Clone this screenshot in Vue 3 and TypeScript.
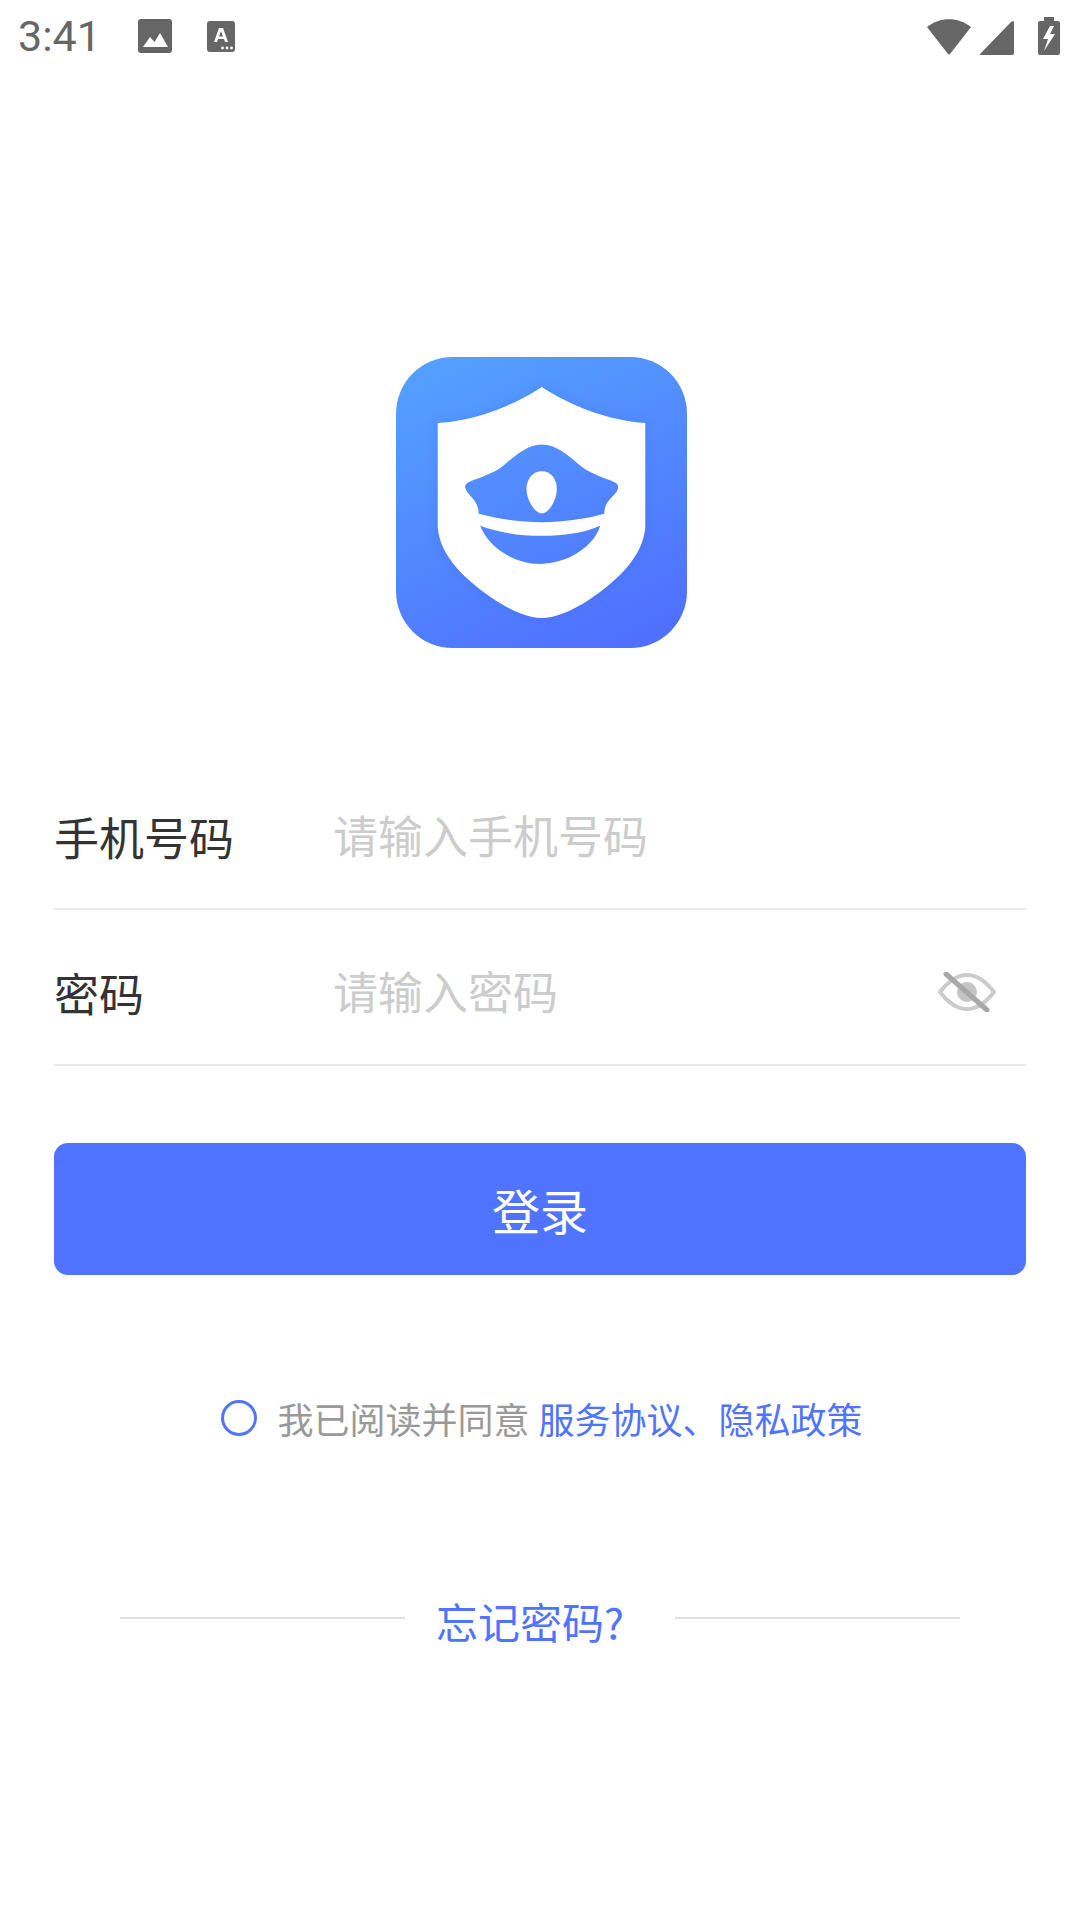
<template>
  <div class="page">
    <div class="status-bar">
      <span class="clock">3:41</span>
      <svg class="ic-image" viewBox="0 0 34 34">
        <rect width="34" height="34" rx="3" fill="#666" />
        <path d="M5 28 L12 18 L16.5 23 L22 14 L30 28Z" fill="#fff" />
      </svg>
      <svg class="ic-app" viewBox="0 0 28 31">
        <rect width="28" height="31" rx="3" fill="#666" />
        <path d="M7 21 L12 7 H16 L21 21 H18 L17 18 H11 L10 21Z M12 15.5 H16 L14 10Z" fill="#fff" fill-rule="evenodd" />
        <circle cx="15.5" cy="27" r="1.4" fill="#fff" />
        <circle cx="20" cy="27" r="1.4" fill="#fff" />
        <circle cx="24.5" cy="27" r="1.4" fill="#fff" />
      </svg>
      <div class="status-right">
        <svg class="ic-wifi" viewBox="0 0 46 36">
          <path d="M1 8 C14 -2.5 32 -2.500 45 8 L24 35 Q23 36 22 35Z" fill="#666" />
        </svg>
        <svg class="ic-signal" viewBox="0 0 34 34">
          <path d="M33 0 Q34 0 34 2 V32 Q34 34 32 34 H1 Q-1 34 1 32 L31 1Z" fill="#666" />
        </svg>
        <svg class="ic-battery" viewBox="0 0 22 38">
          <path d="M6 0 H16 V4 H20 Q22 4 22 6 V36 Q22 38 20 38 H2 Q0 38 0 36 V6 Q0 4 2 4 H6Z" fill="#666" />
          <path d="M12 9 L5 22 H10 L6 34 L17 17 H12 L16 9Z" fill="#fff" />
        </svg>
      </div>
    </div>

    <div class="logo-wrap">
      <svg class="logo" viewBox="48 50 872 872">
        <defs>
          <linearGradient id="logoFill" gradientUnits="userSpaceOnUse" x1="300" y1="50" x2="700" y2="922">
            <stop offset="0" stop-color="#549eff" />
            <stop offset="1" stop-color="#4f70ff" />
          </linearGradient>
        </defs>
        <rect x="48" y="50" width="872" height="872" rx="170" fill="url(#logoFill)" />
        <path class="shield" d="M485 140 C400 195 290 240 173 248 L173 560 C180 650 260 720 340 775 C400 815 450 832 485 832 C520 832 570 815 630 775 C710 720 788 650 795 560 L795 248 C680 240 570 195 485 140Z" fill="#fff" />
        <path d="M485 312 C440 312 400 350 370 375 C340 400 300 410 265 425 C250 432 255 445 262 455 C275 472 295 485 296 520 C350 535 420 545 485 545 C550 545 620 535 672 520 C672 485 695 472 708 455 C715 445 718 432 703 425 C668 410 630 400 600 375 C570 350 530 312 485 312Z" fill="url(#logoFill)" />
        <path d="M485 392 C512 392 530 415 530 445 C530 480 505 519 485 519 C465 519 439 480 439 445 C439 415 458 392 485 392Z" fill="#fff" />
        <path d="M300 556 C360 578 420 586 485 586 C550 586 610 578 660 556 C640 620 560 670 480 670 C400 670 325 620 300 556Z" fill="url(#logoFill)" />
      </svg>
    </div>

    <div class="form">
      <div class="row" v-for="f in fields" :key="f.label">
        <span class="label">{{ f.label }}</span>
        <span class="placeholder">{{ f.placeholder }}</span>
        <svg v-if="f.secret" class="eye" viewBox="0 0 58 40">
          <path d="M2 20 C12 7 20 3 29 3 C38 3 46 7 56 20 C46 33 38 37 29 37 C20 37 12 33 2 20Z" fill="none" stroke="#ccc" stroke-width="4" />
          <circle cx="29" cy="20" r="10" fill="#c4c4c4" />
          <path d="M8 2 L49 38" stroke="#a8a8a8" stroke-width="5" stroke-linecap="round" />
        </svg>
      </div>
      <div class="btn">登录</div>
    </div>

    <div class="agree">
      <span class="radio"></span>
      <span class="agree-text">我已阅读并同意</span>
      <span class="agree-link">服务协议、隐私政策</span>
    </div>

    <div class="forgot">
      <span class="rule"></span>
      <span class="forgot-text">忘记密码?</span>
      <span class="rule"></span>
    </div>
  </div>
</template>

<script setup lang="ts">
interface Field {
  label: string
  placeholder: string
  secret?: boolean
}

const fields: Field[] = [
  { label: '手机号码', placeholder: '请输入手机号码' },
  { label: '密码', placeholder: '请输入密码', secret: true },
]
</script>

<style>
html,
body {
  margin: 0;
  background: #fff;
}
</style>

<style scoped>
.page {
  width: 1080px;
  height: 1920px;
  overflow: hidden;
  background: #fff;
  font-family: "Noto Sans CJK SC", "Noto Sans", sans-serif;
}

.status-bar {
  display: flex;
  align-items: center;
  height: 72px;
  padding: 0 20px 0 18px;
  box-sizing: border-box;
}

.clock {
  font-family: Roboto, sans-serif;
  font-size: 43px;
  color: #666;
  line-height: 72px;
  width: 120px;
}

.ic-image {
  width: 34px;
  height: 34px;
  margin-right: 35px;
}

.ic-app {
  width: 28px;
  height: 31px;
}

.status-right {
  margin-left: auto;
  display: flex;
  align-items: flex-end;
  height: 38px;
}

.ic-wifi {
  width: 46px;
  height: 36px;
  margin-right: 8px;
}

.ic-signal {
  width: 34px;
  height: 34px;
  margin-right: 24px;
}

.ic-battery {
  width: 22px;
  height: 38px;
}

.logo-wrap {
  display: flex;
  justify-content: center;
  padding-top: 285px;
}

.logo {
  width: 291px;
  height: 291px;
  margin-left: 2px;
}

.shield {
  filter: drop-shadow(0 0 14px rgba(50, 90, 220, 0.22));
}

.form {
  padding: 106px 54px 0;
}

.row {
  display: flex;
  align-items: center;
  height: 156px;
  box-sizing: border-box;
  padding-top: 10px;
  border-bottom: 2px solid #e8e8ee;
}

.label {
  width: 279px;
  font-size: 45px;
  color: #333;
}

.placeholder {
  flex: 1;
  font-size: 45px;
  color: #ccc;
  margin-top: -4px;
}

.eye {
  width: 58px;
  height: 40px;
  margin-right: 30px;
  filter: blur(0.6px);
}

.btn {
  margin-top: 77px;
  height: 132px;
  display: flex;
  align-items: center;
  justify-content: center;
  background: #5074ff;
  border-radius: 14px;
  color: #fff;
  font-size: 48px;
  box-sizing: border-box;
}

.agree {
  display: flex;
  align-items: center;
  justify-content: center;
  margin-top: 125px;
  height: 36px;
  font-size: 36px;
  line-height: 36px;
  padding-left: 3px;
}

.radio {
  width: 36px;
  height: 36px;
  box-sizing: border-box;
  border: 3px solid #5074ff;
  border-radius: 50%;
  margin-right: 21px;
  transform: translateX(1px);
}

.agree-text {
  color: #999;
  margin-right: 9px;
}

.agree-link {
  color: #5074ff;
}

.forgot {
  display: flex;
  align-items: center;
  justify-content: center;
  margin-top: 156px;
  height: 52px;
}

.rule {
  width: 285px;
  height: 2px;
  background: #e0e0e0;
}

.forgot-text {
  width: 270px;
  text-align: center;
  font-size: 42px;
  line-height: 52px;
  color: #5074ff;
  padding: 6px 20px 0 0;
  box-sizing: border-box;
}
</style>
